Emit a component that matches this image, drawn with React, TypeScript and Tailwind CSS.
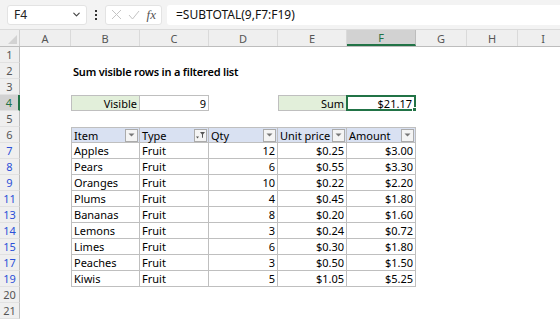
import { ChevronDown } from "lucide-react";

const COLS = [
  { key: "A", w: "w-[51px]" },
  { key: "B", w: "w-[69px]" },
  { key: "C", w: "w-[69px]" },
  { key: "D", w: "w-[69px]" },
  { key: "E", w: "w-[69px]" },
  { key: "F", w: "w-[69px]" },
  { key: "G", w: "w-[51px]" },
  { key: "H", w: "w-[51px]" },
  { key: "I", w: "w-[51px]" },
];

const DATA = [
  { row: 7, item: "Apples", type: "Fruit", qty: 12, price: "$0.25", amount: "$3.00" },
  { row: 8, item: "Pears", type: "Fruit", qty: 6, price: "$0.55", amount: "$3.30" },
  { row: 9, item: "Oranges", type: "Fruit", qty: 10, price: "$0.22", amount: "$2.20" },
  { row: 11, item: "Plums", type: "Fruit", qty: 4, price: "$0.45", amount: "$1.80" },
  { row: 13, item: "Bananas", type: "Fruit", qty: 8, price: "$0.20", amount: "$1.60" },
  { row: 14, item: "Lemons", type: "Fruit", qty: 3, price: "$0.24", amount: "$0.72" },
  { row: 15, item: "Limes", type: "Fruit", qty: 6, price: "$0.30", amount: "$1.80" },
  { row: 17, item: "Peaches", type: "Fruit", qty: 3, price: "$0.50", amount: "$1.50" },
  { row: 19, item: "Kiwis", type: "Fruit", qty: 5, price: "$1.05", amount: "$5.25" },
];

function RowHead({ n, blue, active }: { n: number; blue?: boolean; active?: boolean }) {
  return (
    <div
      className={`w-[20px] h-[16px] shrink-0 flex items-center justify-center text-[11px] border-b border-[#e1e1e1] ${
        active ? "bg-[#d2d2d2] border-r-2 border-r-[#217346] text-[#217346]" : "bg-[#efefef] border-r border-r-[#bdbdbd]"
      } ${blue ? "text-[#2b50d8]" : active ? "" : "text-[#555]"}`}
    >
      {n}
    </div>
  );
}

function Dropdown({ filtered }: { filtered?: boolean }) {
  return (
    <div className="w-[13px] h-[13px] border border-[#ababab] bg-[#f4f4f4] flex items-center justify-center shrink-0">
      {filtered ? (
        <svg width="9" height="8" viewBox="0 0 9 8">
          <path d="M0 5.5h3L1.5 7.5z" fill="#555" />
          <path d="M4 1h5L7 3.5v3.5L6 6.5V3.5z" fill="#555" />
        </svg>
      ) : (
        <svg width="7" height="4" viewBox="0 0 7 4">
          <path d="M0.5 0.5h6L3.5 3.5z" fill="#777" />
        </svg>
      )}
    </div>
  );
}

function EmptyRow({ n }: { n: number }) {
  return (
    <div className="flex">
      <RowHead n={n} />
      <div className="flex-1 h-[16px]" />
    </div>
  );
}

export default function App() {
  const cell = "h-[16px] shrink-0 flex items-center px-[2px] whitespace-nowrap";
  const tcell = `${cell} border-r border-b border-[#bfbfbf]`;
  return (
    <div
      className="w-[560px] h-[320px] overflow-hidden bg-white text-[11px] text-black leading-none"
      style={{ fontFamily: '"Noto Sans", "Open Sans", sans-serif' }}
    >
      {/* formula bar */}
      <div className="h-[30px] bg-[#f3f3f3] flex items-center gap-0 border-b border-[#dadada]">
        <div className="ml-[7px] w-[80px] h-[20px] bg-white rounded-[3px] border border-[#e3e3e3] flex items-center justify-between pl-[6px] pr-[4px] text-[12px] text-[#222]">
          <span>F4</span>
          <ChevronDown size={11} strokeWidth={2.5} className="text-[#444]" />
        </div>
        <div className="w-[18px] flex flex-col items-center gap-[2px]">
          <span className="w-[2px] h-[2px] bg-[#333]" />
          <span className="w-[2px] h-[2px] bg-[#333]" />
          <span className="w-[2px] h-[2px] bg-[#333]" />
        </div>
        <div className="w-[57px] h-[20px] bg-white rounded-[3px] border border-[#e3e3e3] flex items-center justify-between px-[5px]">
          <svg width="11" height="11" viewBox="0 0 11 11">
            <path d="M1 1l9 9M10 1l-9 9" stroke="#c4c4c4" strokeWidth="1" fill="none" />
          </svg>
          <svg width="12" height="10" viewBox="0 0 12 10">
            <path d="M1 5l3.5 4L11 1" stroke="#c4c4c4" strokeWidth="1" fill="none" />
          </svg>
          <span
            className="italic text-[13px] text-[#555]"
            style={{ fontFamily: '"Liberation Serif", serif' }}
          >
            fx
          </span>
        </div>
        <div className="ml-[5px] flex-1 h-[20px] bg-white rounded-l-[3px] flex items-center pl-[9px] text-[12px] text-[#111]">
          =SUBTOTAL(9,F7:F19)
        </div>
      </div>

      {/* column headers */}
      <div className="flex h-[17px] bg-[#efefef] border-b border-[#bdbdbd]">
        <div className="w-[20px] shrink-0 border-r border-[#d0d0d0] flex items-end justify-end p-[2px]">
          <svg width="9" height="9" viewBox="0 0 9 9">
            <path d="M9 0V9H0z" fill="#d2d2d2" />
          </svg>
        </div>
        {COLS.map((c) => (
          <div
            key={c.key}
            className={`${c.w} shrink-0 flex items-center justify-center text-[11px] border-r ${
              c.key === "F"
                ? "bg-[#d2d2d2] border-b-2 border-b-[#217346] border-r-[#bdbdbd] text-[#217346]"
                : "border-r-[#dadada] text-[#555]"
            }`}
          >
            {c.key}
          </div>
        ))}
      </div>

      {/* rows */}
      <EmptyRow n={1} />
      <div className="flex">
        <RowHead n={2} />
        <div className="w-[51px] shrink-0" />
        <div className={`${cell} font-semibold tracking-[-0.2px]`}>Sum visible rows in a filtered list</div>
      </div>
      <EmptyRow n={3} />
      <div className="flex">
        <RowHead n={4} active />
        <div className="w-[51px] shrink-0" />
        <div className={`${cell} w-[69px] justify-end bg-[#e2efda] border border-[#bfbfbf]`}>Visible</div>
        <div className={`${cell} w-[69px] justify-end border-y border-r border-[#bfbfbf]`}>9</div>
        <div className="w-[69px] shrink-0" />
        <div className={`${cell} w-[69px] justify-end bg-[#e2efda] border border-[#bfbfbf]`}>Sum</div>
        <div className={`${cell} justify-end relative border-2 border-[#217346] -ml-[1px] w-[70px]`}>
          $21.17
          <span className="absolute -right-[3px] -bottom-[3px] w-[5px] h-[5px] bg-[#217346] border border-white" />
        </div>
      </div>
      <EmptyRow n={5} />
      <div className="flex">
        <RowHead n={6} />
        <div className="w-[51px] shrink-0" />
        {[
          { t: "Item", f: false, w: "w-[69px] border-l" },
          { t: "Type", f: true, w: "w-[69px]" },
          { t: "Qty", f: false, w: "w-[69px]" },
          { t: "Unit price", f: false, w: "w-[69px]" },
          { t: "Amount", f: false, w: "w-[69px]" },
        ].map((h) => (
          <div
            key={h.t}
            className={`${tcell} ${h.w} border-t bg-[#d9e1f2] justify-between pr-[1px]`}
          >
            <span>{h.t}</span>
            <Dropdown filtered={h.f} />
          </div>
        ))}
      </div>
      {DATA.map((d) => (
        <div key={d.row} className="flex">
          <RowHead n={d.row} blue />
          <div className="w-[51px] shrink-0" />
          <div className={`${tcell} w-[69px] border-l`}>{d.item}</div>
          <div className={`${tcell} w-[69px]`}>{d.type}</div>
          <div className={`${tcell} w-[69px] justify-end`}>{d.qty}</div>
          <div className={`${tcell} w-[69px] justify-end`}>{d.price}</div>
          <div className={`${tcell} w-[69px] justify-end`}>{d.amount}</div>
        </div>
      ))}
      <EmptyRow n={20} />
      <EmptyRow n={21} />
    </div>
  );
}
